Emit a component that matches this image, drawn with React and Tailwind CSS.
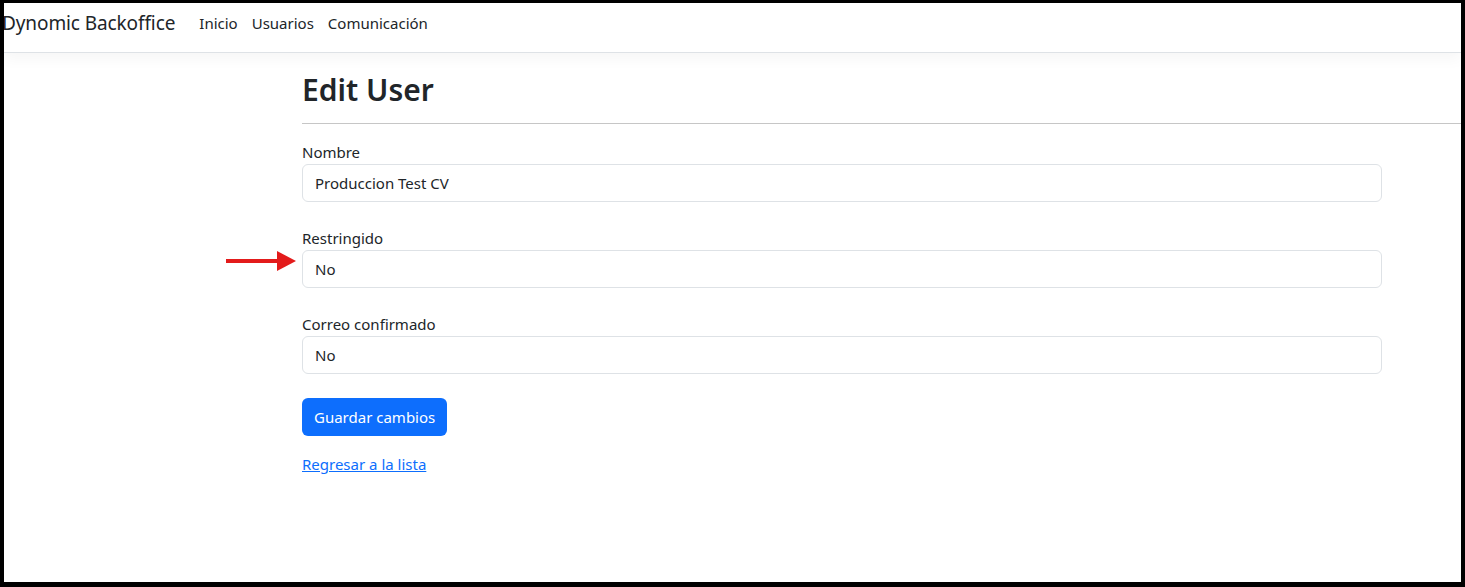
import React from "react";

export default function App() {
  const fields = [
    { label: "Nombre", value: "Produccion Test CV" },
    { label: "Restringido", value: "No", arrow: true },
    { label: "Correo confirmado", value: "No" },
  ];

  return (
    <div className="w-[1465px] h-[587px] overflow-hidden bg-white border-black border-l-4 border-r-4 border-t-[3px] border-b-[5px] font-['Noto_Sans',sans-serif] text-[#212529]">
      {/* Navbar */}
      <nav className="relative z-10 h-[50px] pb-[8px] flex items-center border-b border-[#dee2e6] bg-white shadow-[0_6px_14px_rgba(0,0,0,0.04)]">
        <span className="-ml-[2px] mr-[24px] text-[19px] tracking-[-0.1px] leading-none">Dynomic Backoffice</span>
        <div className="flex items-center gap-[14px] text-[15px]">
          <a className="text-[#212529]">Inicio</a>
          <a className="text-[#212529]">Usuarios</a>
          <a className="text-[#212529]">Comunicación</a>
        </div>
      </nav>

      {/* Content */}
      <main className="pl-[298px]">
        <h2 className="pt-[19px] text-[30px] font-semibold leading-[1.2]">Edit User</h2>
        <hr className="mt-[15px] border-t border-[#c6c6c6]" />

        <form className="w-[1080px] pt-[16px]">
          {fields.map((f) => (
            <div key={f.label} className="mb-[24px]">
              <label className="block text-[15px] leading-[24px]">{f.label}</label>
              <div className="relative">
                {f.arrow && (
                  <svg className="absolute left-[-76px] top-0" width="70" height="22" viewBox="0 0 70 22">
                    <line x1="0" y1="11" x2="54" y2="11" stroke="#e31b1b" strokeWidth="4" />
                    <polygon points="51,1 70,11 51,21" fill="#e31b1b" />
                  </svg>
                )}
                <div className="h-[38px] flex items-center px-[12px] border border-[#dee2e6] rounded-[6px] text-[15px]">
                  {f.value}
                </div>
              </div>
            </div>
          ))}

          <button type="button" className="h-[38px] px-[12px] rounded-[6px] bg-[#0d6efd] text-white text-[15px]">
            Guardar cambios
          </button>

          <div className="mt-[16px]">
            <a className="text-[15px] leading-[24px] text-[#0d6efd] underline">Regresar a la lista</a>
          </div>
        </form>
      </main>
    </div>
  );
}
